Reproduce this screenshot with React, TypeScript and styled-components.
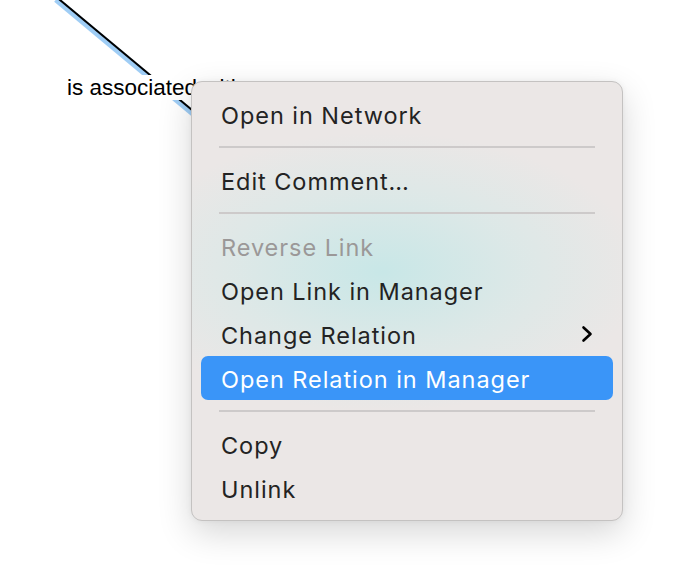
import React from "react";
import styled, { createGlobalStyle } from "styled-components";

const Global = createGlobalStyle`
  html, body { margin: 0; padding: 0; background: #ffffff; }
  body { width: 694px; height: 582px; overflow: hidden; }
`;

const Canvas = styled.div`
  position: relative;
  width: 694px;
  height: 582px;
  background: #ffffff;
  overflow: hidden;
`;

const LinkLine = styled.svg`
  position: absolute;
  left: 0;
  top: 0;
`;

const LinkLabel = styled.div`
  position: absolute;
  left: 66px;
  top: 75px;
  padding: 0 1px;
  background: #ffffff;
  font-family: "Liberation Sans", Arial, sans-serif;
  font-size: 22.5px;
  line-height: 25px;
  color: #000000;
  white-space: nowrap;
`;

const Menu = styled.div`
  position: absolute;
  left: 191px;
  top: 81px;
  width: 432px;
  box-sizing: border-box;
  padding: 10px 9px;
  border: 1px solid #c4c2c1;
  border-radius: 11px;
  background:
    radial-gradient(ellipse 260px 140px at 190px 190px, rgba(200, 231, 231, 1), rgba(212, 233, 232, 0.6) 55%, rgba(235, 231, 230, 0) 100%),
    #ebe7e6;
  box-shadow: 0 12px 34px rgba(0, 0, 0, 0.16), 0 0 6px rgba(0, 0, 0, 0.05);
  font-family: Inter, "Noto Sans", sans-serif;
  display: flex;
  flex-direction: column;
`;

const Item = styled.div<{ $active?: boolean; $disabled?: boolean }>`
  height: 44px;
  box-sizing: border-box;
  display: flex;
  align-items: center;
  justify-content: space-between;
  padding: 3px 19px 0 20px;
  border-radius: 7px;
  font-size: 23.5px;
  letter-spacing: 0.95px;
  color: ${(p) => (p.$active ? "#ffffff" : p.$disabled ? "#9b9898" : "#232323")};
  background: ${(p) => (p.$active ? "#3a95f8" : "transparent")};
`;

const Separator = styled.div`
  height: 2px;
  margin: 10px 18px;
  background: #cdcaca;
`;

const Chevron = styled.svg`
  width: 12px;
  height: 18px;
  margin: -3px 1px 0 0;
`;

export default function App() {
  const x = (y: number) => 60 + 1.2 * y;
  return (
    <Canvas>
      <Global />
      <LinkLine width="694" height="582">
        <line x1={x(-2) - 1.5} y1={-2 + 1.5} x2={x(130) - 1.5} y2={130 + 1.5} stroke="#9fcdf5" strokeWidth="6" />
        <line x1={x(-2)} y1={-2} x2={x(130)} y2={130} stroke="#000000" strokeWidth="2" />
      </LinkLine>
      <LinkLabel>is associated with</LinkLabel>
      <Menu>
        <Item>Open in Network</Item>
        <Separator />
        <Item>Edit Comment…</Item>
        <Separator />
        <Item $disabled>Reverse Link</Item>
        <Item>Open Link in Manager</Item>
        <Item>
          Change Relation
          <Chevron viewBox="0 0 12 18">
            <path d="M2.5 2.5 L9.5 9 L2.5 15.5" fill="none" stroke="#000" strokeWidth="2.6" strokeLinecap="round" strokeLinejoin="round" />
          </Chevron>
        </Item>
        <Item $active>Open Relation in Manager</Item>
        <Separator />
        <Item>Copy</Item>
        <Item>Unlink</Item>
      </Menu>
    </Canvas>
  );
}
